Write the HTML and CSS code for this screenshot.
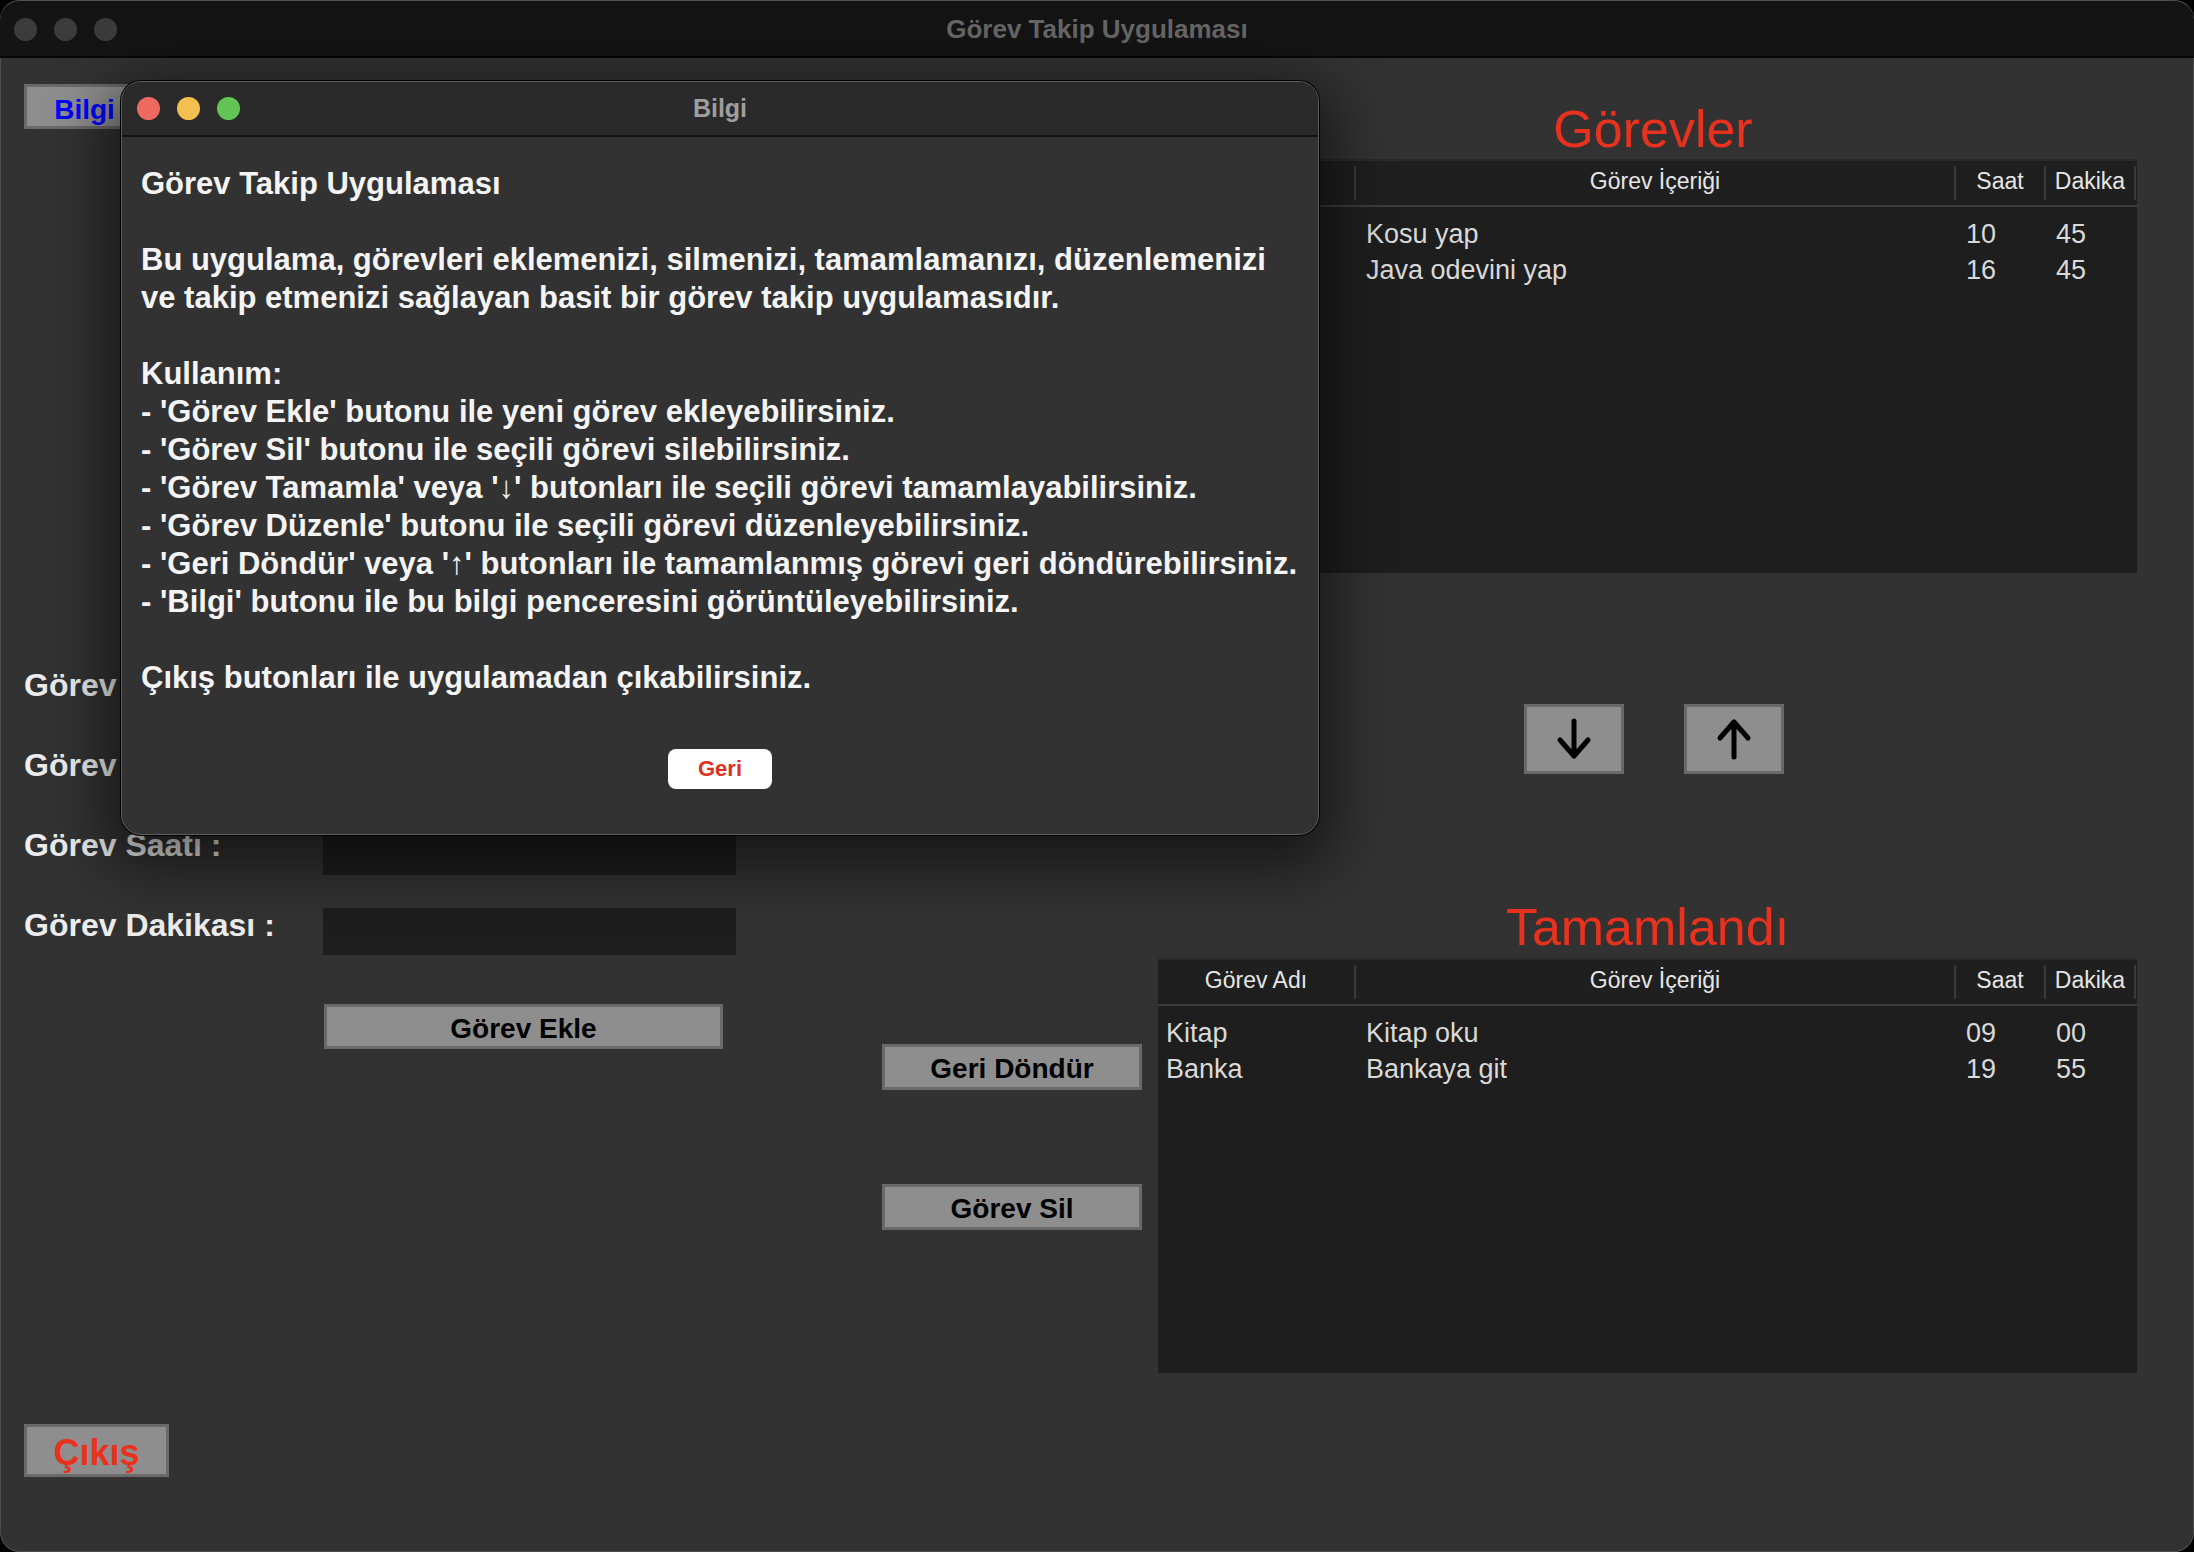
FILE: index.html
```html
<!DOCTYPE html>
<html lang="tr">
<head>
<meta charset="utf-8">
<title>Görev Takip Uygulaması</title>
<link rel="stylesheet" href="styles.css">
</head>
<body>
<div class="window">
  <div class="titlebar">
    <div class="lights inactive"><span></span><span></span><span></span></div>
    <div class="title">Görev Takip Uygulaması</div>
    <div></div>
  </div>
  <div class="content">
    <div class="col-left">
      <div class="btn btn-bilgi">Bilgi</div>
      <div class="form">
        <div class="form-row"><div class="label">Görev Adı :</div><div class="field"></div></div>
        <div class="form-row"><div class="label">Görev İçeriği :</div><div class="field"></div></div>
        <div class="form-row"><div class="label">Görev Saatı :</div><div class="field"></div></div>
        <div class="form-row"><div class="label">Görev Dakikası :</div><div class="field"></div></div>
      </div>
      <div class="btn btn-ekle">Görev Ekle</div>
      <div class="btn btn-cikis">Çıkış</div>
    </div>
    <div class="col-mid">
      <div class="btn btn-mid btn-geri-dondur">Geri Döndür</div>
      <div class="btn btn-mid btn-sil">Görev Sil</div>
    </div>
    <div class="col-right">
      <div class="heading heading-top">Görevler</div>
      <div class="table">
        <div class="thead">
          <div class="th"></div>
          <div class="th">Görev İçeriği</div>
          <div class="th">Saat</div>
          <div class="th">Dakika</div>
        </div>
        <div class="tbody">
          <div class="tr"><div class="td"></div><div class="td">Kosu yap</div><div class="td">10</div><div class="td">45</div></div>
          <div class="tr"><div class="td"></div><div class="td">Java odevini yap</div><div class="td">16</div><div class="td">45</div></div>
        </div>
      </div>
      <div class="arrows">
        <div class="btn btn-arrow">
          <svg width="40" height="44" viewBox="0 0 40 44"><path d="M20 4 V39 M6 23 L20 39 L34 23" fill="none" stroke="#000" stroke-width="5" stroke-linecap="round" stroke-linejoin="round"/></svg>
        </div>
        <div class="btn btn-arrow">
          <svg width="40" height="44" viewBox="0 0 40 44"><path d="M20 40 V5 M6 21 L20 5 L34 21" fill="none" stroke="#000" stroke-width="5" stroke-linecap="round" stroke-linejoin="round"/></svg>
        </div>
      </div>
      <div class="heading heading-bottom">Tamamlandı</div>
      <div class="table table-bottom">
        <div class="thead">
          <div class="th">Görev Adı</div>
          <div class="th">Görev İçeriği</div>
          <div class="th">Saat</div>
          <div class="th">Dakika</div>
        </div>
        <div class="tbody">
          <div class="tr"><div class="td">Kitap</div><div class="td">Kitap oku</div><div class="td">09</div><div class="td">00</div></div>
          <div class="tr"><div class="td">Banka</div><div class="td">Bankaya git</div><div class="td">19</div><div class="td">55</div></div>
        </div>
      </div>
    </div>
  </div>

  <div class="dialog">
    <div class="dlg-titlebar">
      <div class="lights"><span class="red"></span><span class="yellow"></span><span class="green"></span></div>
      <div class="dlg-title">Bilgi</div>
      <div></div>
    </div>
    <div class="dlg-body">
      <div class="msg">Görev Takip Uygulaması

Bu uygulama, görevleri eklemenizi, silmenizi, tamamlamanızı, düzenlemenizi
ve takip etmenizi sağlayan basit bir görev takip uygulamasıdır.

Kullanım:
- 'Görev Ekle' butonu ile yeni görev ekleyebilirsiniz.
- 'Görev Sil' butonu ile seçili görevi silebilirsiniz.
- 'Görev Tamamla' veya '↓' butonları ile seçili görevi tamamlayabilirsiniz.
- 'Görev Düzenle' butonu ile seçili görevi düzenleyebilirsiniz.
- 'Geri Döndür' veya '↑' butonları ile tamamlanmış görevi geri döndürebilirsiniz.
- 'Bilgi' butonu ile bu bilgi penceresini görüntüleyebilirsiniz.

Çıkış butonları ile uygulamadan çıkabilirsiniz.</div>
      <div class="dlg-actions"><div class="geri">Geri</div></div>
    </div>
  </div>
</div>
</body>
</html>
```

FILE: styles.css
```css
* { box-sizing: border-box; }

html, body {
  margin: 0;
  padding: 0;
  background: #000;
  width: 2194px;
  height: 1552px;
  overflow: hidden;
  font-family: "Liberation Sans", Arial, sans-serif;
}

.window {
  position: relative;
  width: 2194px;
  height: 1552px;
  background: #323232;
  border-radius: 20px;
  overflow: hidden;
  box-shadow: inset 0 0 0 1px #4c4c4c;
}

/* ---------- title bar ---------- */
.titlebar {
  height: 58px;
  background: #141414;
  border-top: 1px solid #505050;
  border-bottom: 2px solid #070707;
  display: grid;
  grid-template-columns: 1fr auto 1fr;
  align-items: center;
  border-radius: 20px 20px 0 0;
}

.title {
  color: #666666;
  font-weight: bold;
  font-size: 26px;
  padding-top: 1px;
}

.lights {
  display: flex;
  gap: 17px;
  padding-left: 14px;
  align-items: center;
}

.lights span {
  width: 23px;
  height: 23px;
  border-radius: 50%;
  background: #3b3b3b;
}

.lights.inactive { padding-top: 2px; }

/* ---------- content ---------- */
.content {
  display: flex;
  height: 1494px;
  padding-left: 24px;
}

.btn {
  background: #8e8e8e;
  border: 3px solid #6a6a6a;
  display: flex;
  align-items: center;
  justify-content: center;
  font-weight: bold;
  color: #000;
  padding-top: 4px;
}

.col-left {
  width: 858px;
  display: flex;
  flex-direction: column;
  align-items: flex-start;
}

.btn-bilgi {
  margin-top: 26px;
  width: 121px;
  height: 45px;
  color: #0000ff;
  font-size: 28px;
  padding-top: 6px;
}

.form {
  margin-top: 539px;
  display: flex;
  flex-direction: column;
  gap: 33px;
}

.form-row {
  display: flex;
  align-items: flex-start;
  height: 47px;
}

.label {
  width: 299px;
  font-size: 32px;
  font-weight: bold;
  line-height: 33px;
  padding-top: 1px;
  color: #ececec;
}

.field {
  width: 413px;
  height: 47px;
  background: #1e1e1e;
}

.btn-ekle {
  margin-top: 49px;
  margin-left: 300px;
  width: 399px;
  height: 45px;
  font-size: 28px;
}

.btn-cikis {
  margin-top: 375px;
  width: 145px;
  height: 53px;
  font-size: 36px;
  color: #e8321e;
}

.col-mid {
  width: 260px;
  margin-right: 16px;
  display: flex;
  flex-direction: column;
}

.btn-mid {
  width: 260px;
  height: 46px;
  font-size: 28px;
}

.btn-geri-dondur { margin-top: 986px; }
.btn-sil { margin-top: 94px; }

.col-right {
  width: 979px;
  display: flex;
  flex-direction: column;
}

.heading {
  color: #e8321e;
  font-size: 52px;
  line-height: 58px;
  text-align: center;
}

.heading-top { margin-top: 42px; padding-left: 11px; margin-bottom: 1px; }
.heading-bottom { margin-top: 124px; margin-bottom: 2px; }

/* ---------- tables ---------- */
.table {
  height: 414px;
  background: #1e1e1e;
  border-top: 2px solid #2a2a2a;
  display: flex;
  flex-direction: column;
}

.table-bottom { height: 415px; }

.thead, .tr {
  display: grid;
  grid-template-columns: 198px 600px 90px 90px;
}

.thead {
  height: 46px;
  background: #1f1f1f;
  border-bottom: 2px solid #3c3c3c;
  align-items: center;
}

.th {
  text-align: center;
  color: #e6e6e6;
  font-size: 23px;
  line-height: 30px;
  padding-bottom: 4px;
  border-right: 2px solid #3a3a3a;
  height: 34px;
}

.tbody {
  padding-top: 9px;
}

.tr {
  height: 36px;
  line-height: 36px;
}

.td {
  color: #d9d9d9;
  font-size: 27px;
  padding-left: 10px;
  white-space: nowrap;
}

.tr .td:first-child { padding-left: 8px; }

.arrows {
  margin-top: 131px;
  display: flex;
  gap: 60px;
  padding-left: 366px;
}

.btn-arrow {
  width: 100px;
  height: 70px;
  padding-top: 0;
}

/* ---------- dialog ---------- */
.dialog {
  position: absolute;
  left: 121px;
  top: 81px;
  width: 1198px;
  height: 754px;
  background: #323232;
  border: 1px solid #5d5d5d;
  border-radius: 20px;
  box-shadow: 0 0 0 1px #000, 0 18px 60px 14px rgba(0, 0, 0, 0.55);
  overflow: hidden;
}

.dlg-titlebar {
  height: 55px;
  background: #2a2a2a;
  border-bottom: 2px solid #141414;
  display: grid;
  grid-template-columns: 1fr auto 1fr;
  align-items: center;
}

.dialog .lights {
  gap: 17px;
  padding-left: 15px;
}

.lights .red { background: #ee6a5f; }
.lights .yellow { background: #f5bf4f; }
.lights .green { background: #61c454; }

.dlg-title {
  color: #9e9e9e;
  font-weight: bold;
  font-size: 25px;
}

.dlg-body {
  padding: 28px 0 0 19px;
}

.msg {
  white-space: pre-line;
  color: #f4f4f4;
  font-weight: bold;
  font-size: 31px;
  line-height: 38px;
}

.dlg-actions {
  display: flex;
  justify-content: center;
  margin-top: 52px;
  padding-right: 19px;
}

.geri {
  width: 104px;
  height: 40px;
  background: #fff;
  border-radius: 8px;
  color: #e0301f;
  font-weight: bold;
  font-size: 22px;
  display: flex;
  align-items: center;
  justify-content: center;
}
```
